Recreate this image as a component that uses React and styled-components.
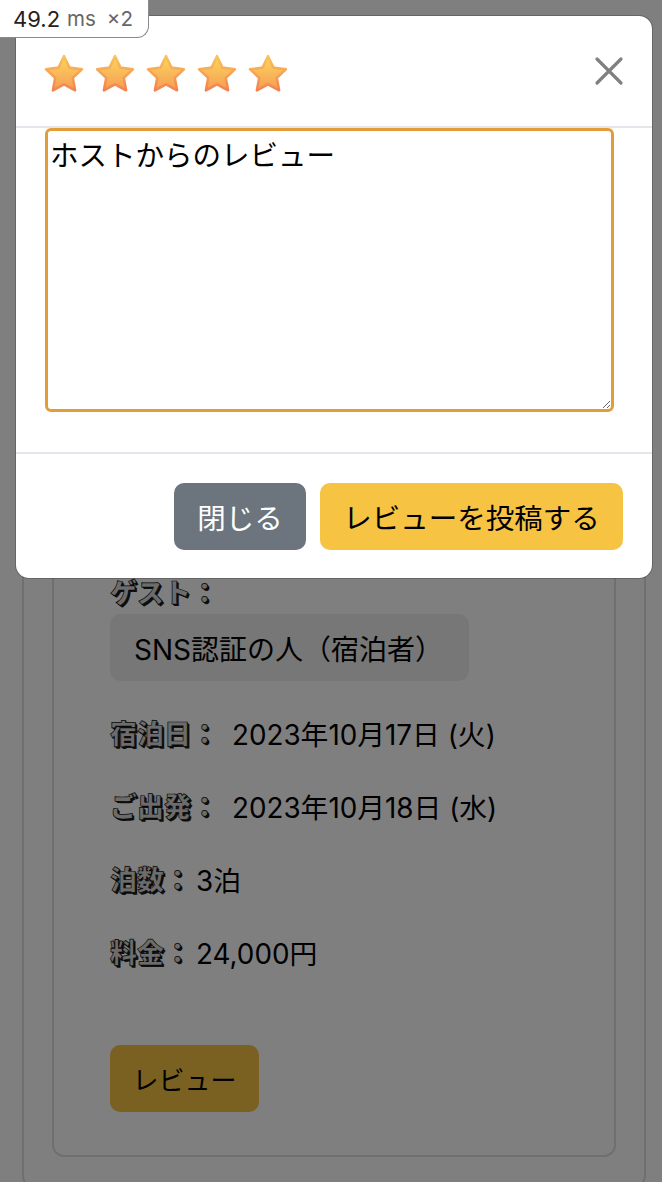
import * as React from "react";
import styled, { createGlobalStyle } from "styled-components";

const GlobalStyle = createGlobalStyle`
  html, body {
    margin: 0;
    padding: 0;
    background: #fff;
  }
  body {
    font-family: "Inter", "Noto Sans CJK JP", sans-serif;
    color: #000;
  }
`;

const Page = styled.div`
  width: 662px;
  height: 1182px;
  overflow: hidden;
  display: flex;
  flex-direction: column;
  justify-content: flex-end;
  box-sizing: border-box;
  padding: 0 16px 0 22px;
`;
const OuterCard = styled.div`
  border: 2px solid #dedede;
  border-radius: 12px;
  margin-bottom: -6px;
  padding: 0 28px 29px 28px;
`;
const InnerCard = styled.div`
  border: 2px solid #dedede;
  border-radius: 12px;
  padding: 500px 56px 43px 56px;
  display: flex;
  flex-direction: column;
  align-items: flex-start;
`;
const Label = styled.span`
  font-size: 27px;
  font-weight: 900;
  color: #d8d8d8;
  -webkit-text-stroke: 0.7px #111;
  text-shadow: 1px 1px 0 #111, 2px 2px 0 #222;
`;
const GuestName = styled.div`
  margin-top: 3px;
  margin-bottom: 32px;
  width: 359px;
  height: 67px;
  box-sizing: border-box;
  padding-left: 24px;
  display: flex;
  align-items: center;
  background: #eeeeee;
  border-radius: 10px;
  font-size: 28px;
`;
const Row = styled.div`
  height: 39px;
  margin-bottom: 34px;
  display: flex;
  align-items: center;
  gap: ${(p) => p.$gap}px;
  font-size: 27.8px;
`;
const ReviewOpen = styled.button`
  margin-top: 40px;
  width: 149px;
  height: 67px;
  border: 0;
  border-radius: 10px;
  background: #f6c343;
  font: inherit;
  font-size: 26px;
  color: #000;
  padding: 0;
`;
const Backdrop = styled.div`
  position: fixed;
  inset: 0;
  background: rgba(0, 0, 0, 0.5);
`;
const Modal = styled.div`
  position: fixed;
  top: 15px;
  left: 15px;
  width: 638px;
  height: 564px;
  box-sizing: border-box;
  background: #fff;
  background-clip: padding-box;
  border: 1px solid rgba(0, 0, 0, 0.2);
  border-radius: 14px;
  display: flex;
  flex-direction: column;
`;
const ModalHeader = styled.div`
  height: 112px;
  flex: none;
  box-sizing: border-box;
  border-bottom: 2px solid #e3e6ea;
  padding: 0 27px 0 25px;
  display: flex;
  align-items: center;
  justify-content: space-between;
`;
const Stars = styled.div`
  display: flex;
  gap: 5px;
  margin-top: 5px;
`;
const CloseButton = styled.button`
  border: 0;
  background: none;
  padding: 0;
  width: 32px;
  height: 32px;
  display: flex;
`;
const ModalBody = styled.div`
  flex: none;
  height: 326px;
  box-sizing: border-box;
  border-bottom: 2px solid #e3e6ea;
  padding: 0 38px 0 29px;
`;
const ReviewText = styled.textarea`
  display: block;
  width: 100%;
  height: 284px;
  box-sizing: border-box;
  border: 3px solid #e29d3a;
  border-radius: 6px;
  padding: 4px 2px;
  font-family: inherit;
  font-size: 28.5px;
  line-height: 42px;
  color: #000;
  outline: none;
  &::placeholder {
    color: #000;
    opacity: 1;
  }
`;
const ModalFooter = styled.div`
  flex: 1;
  display: flex;
  justify-content: flex-end;
  gap: 14px;
  padding: 29px 29px 0 0;
`;
const FooterButton = styled.button`
  height: 67px;
  width: ${(p) => p.$width}px;
  border: 0;
  border-radius: 10px;
  padding: 0;
  font: inherit;
  font-size: 28.5px;
  background: ${(p) => p.$bg};
  color: ${(p) => p.$fg};
`;
const TimingBadge = styled.div`
  position: fixed;
  top: 0;
  left: 0;
  width: 149px;
  height: 38px;
  box-sizing: border-box;
  background: #fff;
  border-right: 1px solid #8a8a8a;
  border-bottom: 1px solid #8a8a8a;
  border-bottom-right-radius: 12px;
  padding-left: 13px;
  display: flex;
  align-items: center;
  font-family: "Inter", sans-serif;
  font-size: 22px;
  color: #222;
`;
const TimingUnit = styled.span`
  color: #666;
  font-size: 20.5px;
  margin-left: ${(p) => p.$gap}px;
`;

const Star = ({ id }) => (
  <svg width="46" height="46" viewBox="0 0 44 44" aria-hidden="true">
    <defs>
      <linearGradient id={`${id}-fill`} x1="0" y1="0" x2="0" y2="1">
        <stop offset="0" stopColor="#fbd75c" />
        <stop offset="1" stopColor="#f79c56" />
      </linearGradient>
      <linearGradient id={`${id}-edge`} x1="0" y1="0" x2="0" y2="1">
        <stop offset="0" stopColor="#f9c45a" />
        <stop offset="1" stopColor="#f4824f" />
      </linearGradient>
    </defs>
    <path
      d="M22 5 L27.2 15.9 L39.1 17.4 L30.4 25.7 L32.6 37.6 L22 31.8 L11.4 37.6 L13.6 25.7 L4.9 17.4 L16.8 15.9 Z"
      fill={`url(#${id}-fill)`}
      stroke={`url(#${id}-edge)`}
      strokeWidth="2.5"
      strokeLinejoin="round"
    />
  </svg>
);

const App = () => {
  return (
    <>
      <GlobalStyle />
      <Page>
        <OuterCard>
          <InnerCard>
            <Label>ゲスト：</Label>
            <GuestName>SNS認証の人（宿泊者）</GuestName>
            <Row $gap={14}>
              <Label>宿泊日：</Label>
              <span>2023年10月17日 (火)</span>
            </Row>
            <Row $gap={14}>
              <Label>ご出発：</Label>
              <span>2023年10月18日 (水)</span>
            </Row>
            <Row $gap={5}>
              <Label>泊数：</Label>
              <span>3泊</span>
            </Row>
            <Row $gap={5}>
              <Label>料金：</Label>
              <span>24,000円</span>
            </Row>
            <ReviewOpen>レビュー</ReviewOpen>
          </InnerCard>
        </OuterCard>
      </Page>
      <Backdrop />
      <Modal>
        <ModalHeader>
          <Stars>
            {[0, 1, 2, 3, 4].map((i) => (
              <Star key={i} id={`star-${i}`} />
            ))}
          </Stars>
          <CloseButton aria-label="閉じる">
            <svg width="32" height="32" viewBox="0 0 32 32" aria-hidden="true">
              <path d="M4 4 L28 28 M28 4 L4 28" stroke="#808080" strokeWidth="3.2" strokeLinecap="round" />
            </svg>
          </CloseButton>
        </ModalHeader>
        <ModalBody>
          <ReviewText placeholder="ホストからのレビュー" />
        </ModalBody>
        <ModalFooter>
          <FooterButton $width={132} $bg="#6c757d" $fg="#fff">閉じる</FooterButton>
          <FooterButton $width={303} $bg="#f6c343" $fg="#000">レビューを投稿する</FooterButton>
        </ModalFooter>
      </Modal>
      <TimingBadge>
        49.2
        <TimingUnit $gap={7}>ms</TimingUnit>
        <TimingUnit $gap={11}>×2</TimingUnit>
      </TimingBadge>
    </>
  );
};

export default App;
